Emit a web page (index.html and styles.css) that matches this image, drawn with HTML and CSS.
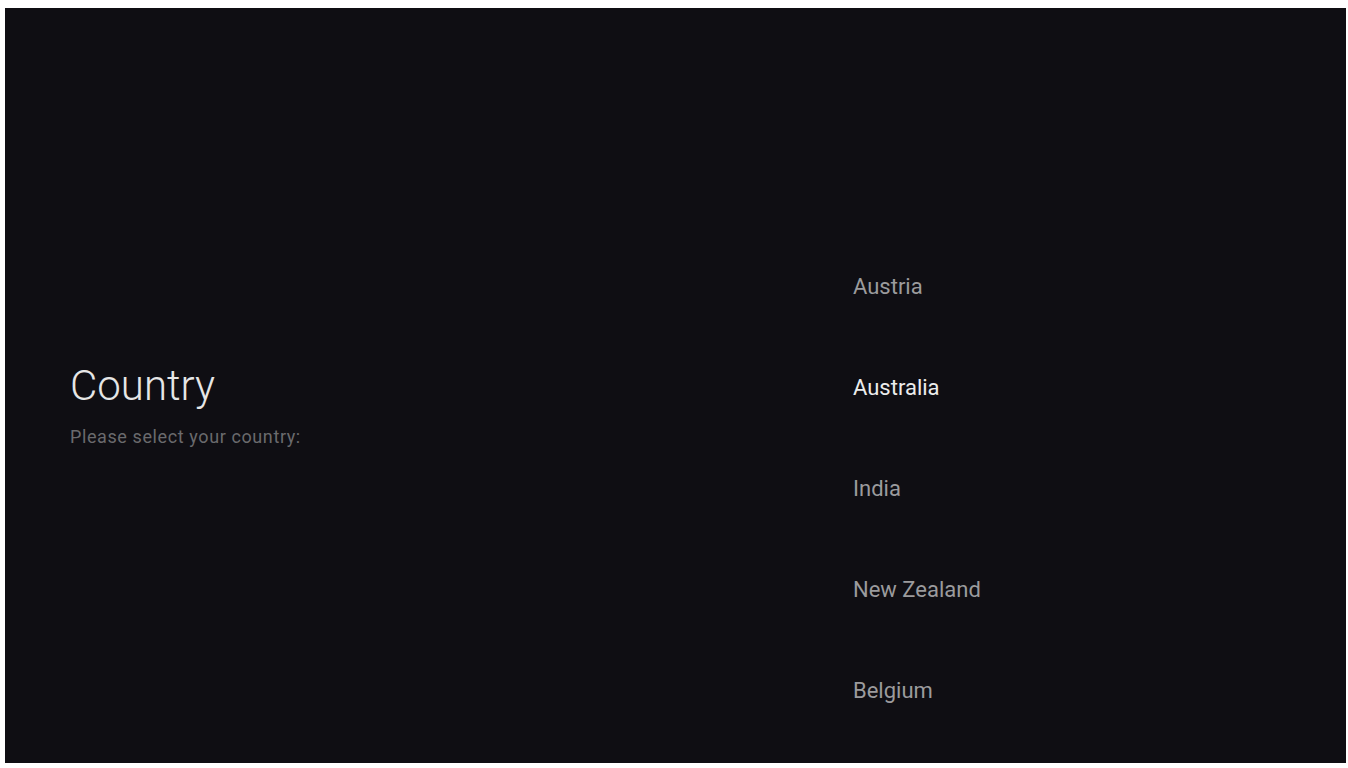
FILE: index.html
```html
<!DOCTYPE html>
<html lang="en">
<head>
<meta charset="utf-8">
<title>Country</title>
<link rel="stylesheet" href="styles.css">
</head>
<body>
<main class="screen">
  <section class="intro">
    <h1 class="title">Country</h1>
    <p class="subtitle">Please select your country:</p>
  </section>
  <ul class="list">
    <li class="item">Austria</li>
    <li class="item item-focused">Australia</li>
    <li class="item">India</li>
    <li class="item">New Zealand</li>
    <li class="item">Belgium</li>
  </ul>
</main>
</body>
</html>
```

FILE: styles.css
```css
html, body {
  margin: 0;
  padding: 0;
  background: #ffffff;
}

body {
  width: 1348px;
  height: 768px;
  overflow: hidden;
  font-family: Roboto, "Liberation Sans", sans-serif;
}

.screen {
  box-sizing: border-box;
  margin: 8px 2px 5px 5px;
  width: 1341px;
  height: 755px;
  background: #0f0e13;
  display: grid;
  grid-template-columns: 848px 1fr;
}

.intro {
  padding-left: 65px;
  padding-top: 355px;
}

.title {
  margin: 0;
  font-weight: 300;
  font-size: 42px;
  line-height: 46px;
  color: #e6e6e6;
}

.subtitle {
  margin: 17px 0 0;
  font-size: 18px;
  line-height: 22px;
  letter-spacing: 0.6px;
  color: #6a6a6d;
}

.list {
  list-style: none;
  margin: 0;
  padding: 255px 0 0;
}

.item {
  height: 101px;
  line-height: 48px;
  font-size: 22px;
  color: #9b9b9d;
}

.item-focused {
  color: #ececec;
}
```
